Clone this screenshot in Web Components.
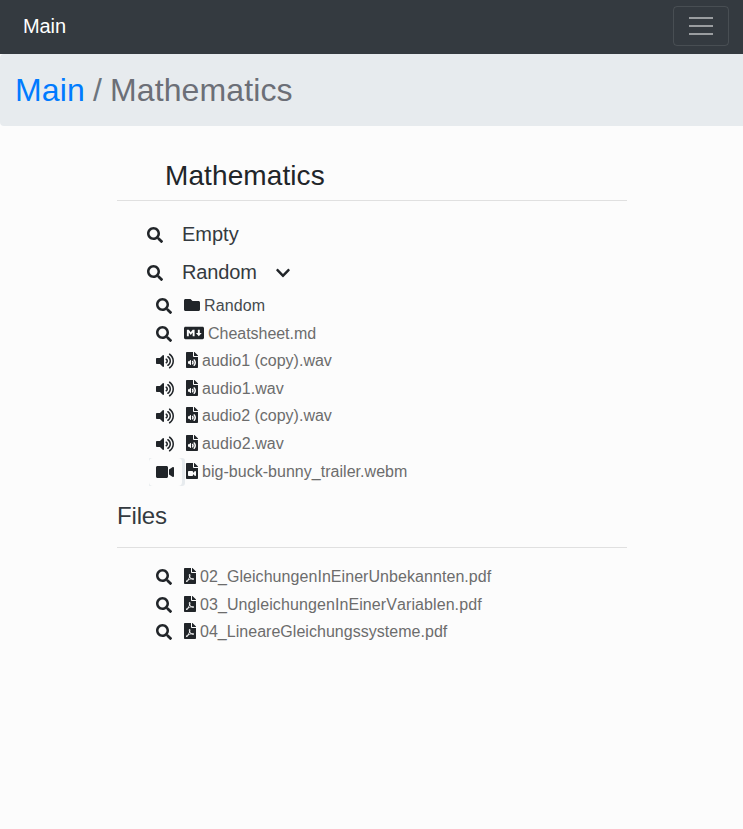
<!DOCTYPE html>
<html lang="en">
<head>
<meta charset="utf-8">
<title>Mathematics</title>
<style>
body{margin:0;background:#fcfcfc;color:#212529;font:16px/24px "Liberation Sans",Arial,sans-serif;min-height:829px}
main{display:block;width:510px;margin:0 0 0 117px}
</style>
</head>
<body>
<nav-bar>Main</nav-bar>
<bread-crumb><span slot="parent">Main</span>Mathematics</bread-crumb>
<main>
<section-title style="--size:28px;--indent:48px;--top:33px;--height:42px;--color:#212529;letter-spacing:.1px">Mathematics</section-title>
<folder-row style="margin-top:14px">Empty</folder-row>
<folder-row open style="letter-spacing:-.15px">Random</folder-row>
<file-list style="padding-top:1px">
<file-row action="search" type="folder" style="color:#454a4e;letter-spacing:.1px">Random</file-row>
<file-row action="search" type="markdown" style="letter-spacing:-.03px">Cheatsheet.md</file-row>
<file-row action="volume" type="audio">audio1 (copy).wav</file-row>
<file-row action="volume" type="audio" style="letter-spacing:.1px">audio1.wav</file-row>
<file-row action="volume" type="audio">audio2 (copy).wav</file-row>
<file-row action="volume" type="audio" style="letter-spacing:.1px">audio2.wav</file-row>
<file-row action="video" type="film" style="letter-spacing:.03px">big-buck-bunny_trailer.webm</file-row>
</file-list>
<section-title style="--size:24px;--indent:0px;--top:13px;--height:49px;--color:#343a40;letter-spacing:-.15px">Files</section-title>
<file-list style="padding-top:15px">
<file-row action="search" type="pdf" style="letter-spacing:.06px">02_GleichungenInEinerUnbekannten.pdf</file-row>
<file-row action="search" type="pdf" style="letter-spacing:.09px;font-kerning:none">03_UngleichungenInEinerVariablen.pdf</file-row>
<file-row action="search" type="pdf" style="letter-spacing:.03px">04_LineareGleichungssysteme.pdf</file-row>
</file-list>
</main>
<script>
const ICONS = {
search:[512,"M505 442.7L405.3 343c-4.5-4.5-10.6-7-17-7H372c27.6-35.3 44-79.7 44-128C416 93.1 322.9 0 208 0S0 93.1 0 208s93.1 208 208 208c48.3 0 92.7-16.4 128-44v16.3c0 6.4 2.5 12.5 7 17l99.7 99.7c9.4 9.4 24.6 9.4 33.9 0l28.3-28.3c9.4-9.4 9.4-24.6.1-34zM208 336c-70.7 0-128-57.2-128-128 0-70.7 57.2-128 128-128 70.7 0 128 57.2 128 128 0 70.7-57.2 128-128 128z"],
folder:[512,"M464 128H272l-64-64H48C21.49 64 0 85.49 0 112v288c0 26.51 21.49 48 48 48h416c26.51 0 48-21.49 48-48V176c0-26.51-21.49-48-48-48z"],
chevron:[448,"M207.029 381.476L12.686 187.132c-9.373-9.373-9.373-24.569 0-33.941l22.667-22.667c9.357-9.357 24.522-9.375 33.901-.04L224 284.505l154.745-154.021c9.379-9.335 24.544-9.317 33.901.04l22.667 22.667c9.373 9.373 9.373 24.569 0 33.941L240.971 381.476c-9.373 9.372-24.569 9.372-33.942 0z"],
markdown:[640,"M593.8 59.1H46.2C20.7 59.1 0 79.8 0 105.2v301.5c0 25.5 20.7 46.2 46.2 46.2h547.7c25.5 0 46.2-20.7 46.1-46.1V105.2c0-25.4-20.7-46.1-46.2-46.1zM338.5 360.6H277v-120l-61.5 76.9-61.5-76.9v120H92.3V151.4h61.5l61.5 76.9 61.5-76.9h61.5v209.2zm135.3 3.1L381.5 256H443V151.4h61.5V256H566z"],
volume:[576,"M215.03 71.05L126.06 160H24c-13.26 0-24 10.74-24 24v144c0 13.25 10.74 24 24 24h102.06l88.97 88.95c15.03 15.03 40.97 4.47 40.97-16.97V88.02c0-21.46-25.96-31.98-40.97-16.97zm233.32-51.08c-11.17-7.33-26.18-4.24-33.51 6.95-7.34 11.17-4.22 26.18 6.95 33.51 66.27 43.49 105.82 116.6 105.82 195.58 0 78.98-39.55 152.09-105.82 195.58-11.17 7.32-14.29 22.34-6.95 33.5 7.04 10.71 21.93 14.56 33.51 6.95C528.27 439.58 576 351.33 576 256S528.27 72.43 448.35 19.97zM480 256c0-63.53-32.06-121.94-85.77-156.24-11.19-7.14-26.03-3.82-33.12 7.46s-3.78 26.21 7.41 33.36C408.27 165.97 432 209.11 432 256s-23.73 90.02-63.48 115.42c-11.19 7.14-14.5 22.07-7.41 33.36 6.51 10.36 21.12 15.14 33.12 7.46C447.94 377.94 480 319.54 480 256zm-141.77-76.87c-11.58-6.33-26.19-2.16-32.61 9.45-6.39 11.61-2.16 26.2 9.45 32.61C327.98 228.28 336 241.63 336 256c0 14.38-8.02 27.72-20.92 34.81-11.61 6.41-15.84 21-9.45 32.61 6.43 11.66 21.05 15.8 32.61 9.45 28.23-15.55 45.77-45 45.77-76.88s-17.54-61.32-45.78-76.86z"],
audio:[384,"M224 136V0H24C10.7 0 0 10.7 0 24v464c0 13.3 10.7 24 24 24h336c13.3 0 24-10.7 24-24V160H248c-13.2 0-24-10.8-24-24zm-64 268c0 10.7-12.9 16-20.5 8.5L104 376H76c-6.6 0-12-5.4-12-12v-56c0-6.6 5.4-12 12-12h28l35.5-36.5c7.6-7.6 20.5-2.2 20.5 8.5v136zm33.2-47.6c9.1-9.3 9.1-24.1 0-33.4-22.1-22.8 12.2-56.2 34.4-33.5 27.2 27.9 27.2 72.4 0 100.4-21.8 22.3-56.9-10.4-34.4-33.5zm86-117.1c54.4 55.9 54.4 144.8 0 200.8-21.8 22.4-57-10.3-34.4-33.5 36.2-37.2 36.3-96.5 0-133.8-22.1-22.8 12.3-56.3 34.4-33.5zM384 121.9v6.1H256V0h6.1c6.4 0 12.5 2.5 17 7l97.9 98c4.5 4.5 7 10.6 7 16.9z"],
film:[384,"M384 121.941V128H256V0h6.059c6.365 0 12.47 2.529 16.971 7.029l97.941 97.941A24.005 24.005 0 0 1 384 121.941zM224 136V0H24C10.745 0 0 10.745 0 24v464c0 13.255 10.745 24 24 24h336c13.255 0 24-10.745 24-24V160H248c-13.2 0-24-10.8-24-24zm96 144.016v111.963c0 21.445-25.943 31.998-40.971 16.971L224 353.941V392c0 13.255-10.745 24-24 24H88c-13.255 0-24-10.745-24-24V280c0-13.255 10.745-24 24-24h112c13.255 0 24 10.745 24 24v38.059l55.029-55.013c15.011-15.01 40.971-4.491 40.971 16.97z"],
video:[576,"M336.2 64H47.8C21.4 64 0 85.4 0 111.8v288.4C0 426.6 21.4 448 47.8 448h288.4c26.4 0 47.8-21.4 47.8-47.8V111.8c0-26.4-21.4-47.8-47.8-47.8zm189.4 37.7L416 177.3v157.4l109.6 75.5c21.2 14.6 50.4-.3 50.4-25.8V127.5c0-25.4-29.1-40.4-50.4-25.8z"],
pdf:[384,"M181.9 256.1c-5-16-4.9-46.9-2-46.9 8.4 0 7.6 36.9 2 46.9zm-1.7 47.2c-7.7 20.2-17.3 43.3-28.4 62.7 18.3-7 39-17.2 62.9-21.9-12.7-9.6-24.9-23.4-34.5-40.8zM86.1 428.1c0 .8 13.2-5.4 34.9-40.2-6.7 6.3-29.1 24.5-34.9 40.2zM248 160h136v328c0 13.3-10.7 24-24 24H24c-13.3 0-24-10.7-24-24V24C0 10.7 10.7 0 24 0h200v136c0 13.2 10.8 24 24 24zm-8 171.8c-20-12.2-33.3-29-42.7-53.8 4.5-18.5 11.6-46.6 6.2-64.2-4.7-29.4-42.4-26.5-47.8-6.8-5 18.3-.4 44.1 8.1 77-11.6 27.6-28.7 64.6-40.8 85.8-.1 0-.1.1-.2.1-27.1 13.9-73.6 44.5-54.5 68 5.6 6.9 16 10 21.5 10 17.9 0 35.7-18 61.1-61.8 25.8-8.5 54.1-19.1 79-23.2 21.7 11.8 47.1 19.5 64 19.5 29.2 0 31.2-32 19.7-43.4-13.9-13.6-54.3-9.7-73.6-7.2zM377 105L279 7c-4.5-4.5-10.6-7-17-7h-6v128h128v-6.1c0-6.3-2.5-12.4-7-16.9zm-74.1 255.3c4.1-2.7-2.5-11.9-42.8-9 37.1 15.8 42.8 9 42.8 9z"]
};
function define(name, render){
  customElements.define(name, class extends HTMLElement{
    constructor(){ super(); this.attachShadow({mode:"open"}); }
    connectedCallback(){ this.shadowRoot.innerHTML = render(this); }
  });
}
define("fa-icon", el => {
  const [w, d] = ICONS[el.getAttribute("name")];
  return `<style>:host{display:block;flex:none;height:16px;width:${w/32}px;color:#212529}svg{display:block}</style>
  <svg width="${w/32}" height="16" viewBox="0 0 ${w} 512" fill="currentColor"><path d="${d}"/></svg>`;
});
define("nav-bar", () => `<style>
  :host{display:flex;box-sizing:border-box;height:54px;padding:0 14px 2px 23px;align-items:center;justify-content:space-between;background:#343a40;color:#fff;font-size:20px;line-height:30px}
  span{letter-spacing:-.1px}
  button{box-sizing:border-box;width:56px;height:40px;padding:0;border:1px solid rgba(255,255,255,.1);border-radius:4px;background:none;display:grid;place-items:center}
  svg{display:block}</style>
  <span><slot></slot></span>
  <button aria-label="Menu"><svg width="30" height="30" viewBox="0 0 30 30"><path stroke="rgba(255,255,255,.5)" stroke-width="2" d="M3 7h24M3 15h24M3 23h24"/></svg></button>`);
define("bread-crumb", () => `<style>
  :host{display:flex;box-sizing:border-box;height:72px;padding:0 15px;align-items:center;gap:8px;background:#e7ebee;border-radius:4px 0 0 4px;color:#6c757d;font-size:32px;line-height:48px;letter-spacing:.13px}
  .link{color:#007bff}.current{color:#6c6f77}</style>
  <span class="link"><slot name="parent"></slot></span><span>/</span><span class="current"><slot></slot></span>`);
define("section-title", () => `<style>
  :host{display:block;padding-top:var(--top)}
  h2{box-sizing:border-box;height:var(--height);margin:0;padding-left:var(--indent);border-bottom:1px solid #e0e0e0;color:var(--color);font-size:var(--size);line-height:34px;font-weight:400}</style>
  <h2><slot></slot></h2>`);
define("folder-row", el => `<style>
  :host{display:flex;height:38px;align-items:center;padding-left:30px;font-size:20px;line-height:30px;color:#343a40}
  span{margin:0 19px}fa-icon{margin-top:2px}</style>
  <fa-icon name="search"></fa-icon><span><slot></slot></span>${el.hasAttribute("open") ? '<fa-icon name="chevron"></fa-icon>' : ""}`);
define("file-list", () => `<style>
  :host{display:flex;flex-direction:column}
  ::slotted(*){height:28px}
  ::slotted(:nth-child(2)),::slotted(:nth-child(4)){height:27px}
  </style><slot></slot>`);
define("file-row", el => {
  const type = el.getAttribute("type"), action = el.getAttribute("action");
  const wide = action !== "search";
  return `<style>
  :host{display:flex;align-items:flex-start;padding-left:32px;color:#6c6c6c}
  .frame{display:flex;flex:none;width:${wide ? 37 : 35}px;height:28px}
  .video{width:36px;margin-right:1px;border-radius:1px 3px 3px 1px;background:#e7ebee}
  .action{box-sizing:border-box;width:33px;height:28px;padding:6px 0 0 7px;border-radius:4px;background:#fcfcfc}
  .type{margin:5px 4px 0 0}
  .name{margin-top:2px}</style>
  <div class="frame ${action}"><div class="action"><fa-icon name="${action}"></fa-icon></div></div>
  <fa-icon class="type" name="${type}"></fa-icon><span class="name"><slot></slot></span>`;
});
</script>
</body>
</html>
